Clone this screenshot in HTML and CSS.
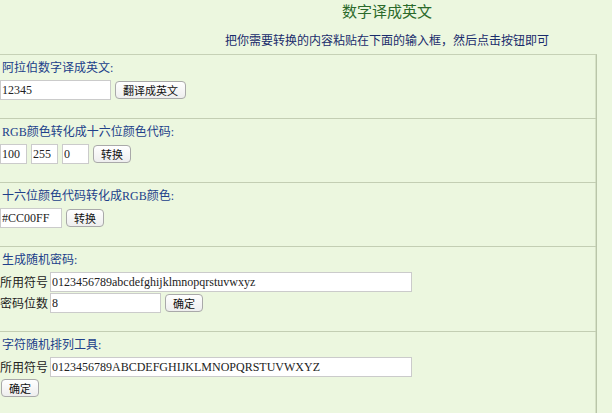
FILE: index.html
```html
<!DOCTYPE html>
<html>
<head>
  <meta charset="utf-8">
  <link rel="stylesheet" href="styles.css">
</head>
<body>
  <div class="page">
    <h1 class="title">数字译成英文</h1>
    <p class="tip">把你需要转换的内容粘贴在下面的输入框，然后点击按钮即可</p>

    <div class="tools">
      <div class="tool">
        <div class="tool-name">阿拉伯数字译成英文:</div>
        <div class="line">
          <input class="num" value="12345">
          <button>翻译成英文</button>
        </div>
      </div>

      <div class="tool">
        <div class="tool-name">RGB颜色转化成十六位颜色代码:</div>
        <div class="line">
          <input class="rgb" value="100">
          <input class="rgb" value="255">
          <input class="rgb" value="0">
          <button>转换</button>
        </div>
      </div>

      <div class="tool">
        <div class="tool-name">十六位颜色代码转化成RGB颜色:</div>
        <div class="line">
          <input class="hex" value="#CC00FF">
          <button>转换</button>
        </div>
      </div>

      <div class="tool">
        <div class="tool-name">生成随机密码:</div>
        <div class="line">
          <span class="label">所用符号</span>
          <input class="chars" value="0123456789abcdefghijklmnopqrstuvwxyz">
        </div>
        <div class="line">
          <span class="label">密码位数</span>
          <input class="num" value="8">
          <button>确定</button>
        </div>
      </div>

      <div class="tool">
        <div class="tool-name">字符随机排列工具:</div>
        <div class="line">
          <span class="label">所用符号</span>
          <input class="chars" value="0123456789ABCDEFGHIJKLMNOPQRSTUVWXYZ">
        </div>
        <div class="line">
          <button class="first">确定</button>
        </div>
      </div>
    </div>
  </div>
</body>
</html>
```

FILE: styles.css
```css
body {
  margin: 0;
  background-color: #ecf7df;
  font-family: "Liberation Serif", "Noto Sans CJK SC", serif;
  overflow: hidden;
}
.page { width: 612px; }
.title {
  height: 20px;
  margin: 0;
  padding: 2px 0 0 162px;
  font-size: 15px;
  line-height: 20px;
  font-weight: normal;
  color: #2b6a2b;
  text-align: center;
}
.tip {
  height: 16px;
  margin: 11px 0 0;
  padding-left: 162px;
  font-size: 12px;
  line-height: 16px;
  color: #1a2c6c;
  text-align: center;
}
.tools {
  width: 596px;
  margin-top: 5px;
  border-top: 1px solid #c6d1b6;
  border-right: 1px solid #b9c5a9;
  box-shadow: inset -4px 0 0 -3px #d6e2c6;
}
.tool {
  padding: 6px 0 18px;
  border-bottom: 1px solid #c3ceb3;
}
.tool:last-child { border-bottom: none; }
.tool-name {
  height: 14px;
  padding-left: 2px;
  margin-bottom: 5px;
  font-size: 12px;
  line-height: 14px;
  color: #21408a;
}
.line {
  display: flex;
  align-items: center;
  gap: 4px;
  height: 20px;
  margin-bottom: 1px;
}
.line:last-child { margin-bottom: 0; }
input {
  box-sizing: border-box;
  height: 20px;
  margin: 0;
  padding: 0 1px;
  border: 1px solid #cbcbcb;
  background: #fff;
  font-family: "Liberation Serif", serif;
  font-size: 12px;
  color: #222;
}
.num { width: 111px; }
.rgb { width: 27px; }
.hex { width: 62px; }
.chars { width: 362px; margin-left: -2px; }
.label {
  width: 48px;
  font-family: "Noto Sans CJK SC", sans-serif;
  font-size: 12px;
  line-height: 20px;
  color: #222;
}
.label + .num { margin-left: -2px; }
button {
  height: 18px;
  margin: 0;
  padding: 0 7px;
  border: 1px solid #a9a9a9;
  border-radius: 4px;
  background: linear-gradient(#ffffff, #eeeeee);
  font-family: "Noto Sans CJK SC", sans-serif;
  font-size: 11px;
  line-height: 16px;
  color: #111;
}
.first { margin-left: 1px; }
```
